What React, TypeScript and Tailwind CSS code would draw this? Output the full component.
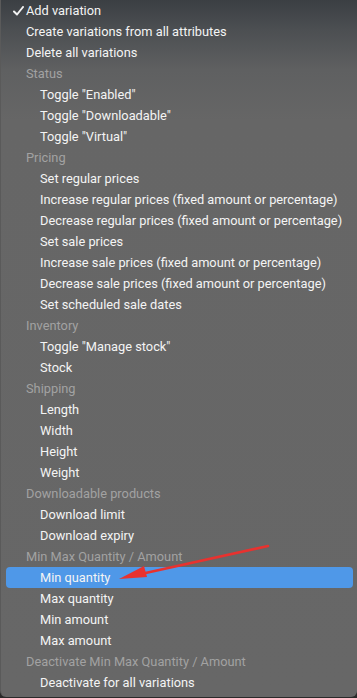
import React from "react";

type Item = { label: string; kind: "top" | "header" | "sub"; checked?: boolean; active?: boolean };

const items: Item[] = [
  { label: "Add variation", kind: "top", checked: true },
  { label: "Create variations from all attributes", kind: "top" },
  { label: "Delete all variations", kind: "top" },
  { label: "Status", kind: "header" },
  { label: 'Toggle "Enabled"', kind: "sub" },
  { label: 'Toggle "Downloadable"', kind: "sub" },
  { label: 'Toggle "Virtual"', kind: "sub" },
  { label: "Pricing", kind: "header" },
  { label: "Set regular prices", kind: "sub" },
  { label: "Increase regular prices (fixed amount or percentage)", kind: "sub" },
  { label: "Decrease regular prices (fixed amount or percentage)", kind: "sub" },
  { label: "Set sale prices", kind: "sub" },
  { label: "Increase sale prices (fixed amount or percentage)", kind: "sub" },
  { label: "Decrease sale prices (fixed amount or percentage)", kind: "sub" },
  { label: "Set scheduled sale dates", kind: "sub" },
  { label: "Inventory", kind: "header" },
  { label: 'Toggle "Manage stock"', kind: "sub" },
  { label: "Stock", kind: "sub" },
  { label: "Shipping", kind: "header" },
  { label: "Length", kind: "sub" },
  { label: "Width", kind: "sub" },
  { label: "Height", kind: "sub" },
  { label: "Weight", kind: "sub" },
  { label: "Downloadable products", kind: "header" },
  { label: "Download limit", kind: "sub" },
  { label: "Download expiry", kind: "sub" },
  { label: "Min Max Quantity / Amount", kind: "header" },
  { label: "Min quantity", kind: "sub", active: true },
  { label: "Max quantity", kind: "sub" },
  { label: "Min amount", kind: "sub" },
  { label: "Max amount", kind: "sub" },
  { label: "Deactivate Min Max Quantity / Amount", kind: "header" },
  { label: "Deactivate for all variations", kind: "sub" },
];

// checkmark next to the current value
const Check = () => (
  <svg width="11" height="10" viewBox="0 0 11 10" className="absolute left-[12px] top-[6px]">
    <path d="M1 5.5 L4 8.5 L10 1" fill="none" stroke="#f2f2f2" strokeWidth="2" strokeLinecap="round" strokeLinejoin="round" />
  </svg>
);

export default function App() {
  return (
    <div className="relative w-[357px] h-[698px] overflow-hidden bg-[#2a2a2a]">
      <div
        className="relative h-[697px] overflow-hidden rounded-b-[6px] border-l border-[#5a5a5a] bg-[linear-gradient(to_bottom,#3b3f43_0px,#4c4f52_30px,#5f6061_70px,#666666_120px,#676767_698px)]"
        style={{ fontFamily: 'Roboto, "Noto Sans", sans-serif' }}
      >
        <ul className="flex flex-col text-[12.8px]">
          {items.map((it, i) => (
            <li key={i} className="relative h-[21px]">
              {it.active && (
                <div className="absolute left-[5px] right-[4px] top-0 bottom-0 rounded-[4px] bg-[#4f98e8]" />
              )}
              {it.checked && <Check />}
              <span
                className={
                  "absolute top-0 leading-[21px] whitespace-nowrap " +
                  (it.kind === "sub" ? "left-[39px] " : "left-[25px] ") +
                  (it.kind === "header" ? "text-[#a2a2a2]" : "text-[#f4f4f4]")
                }
              >
                {it.label}
              </span>
            </li>
          ))}
        </ul>
        {/* red annotation arrow */}
        <svg className="absolute left-0 top-0 pointer-events-none" width="357" height="698" viewBox="0 0 357 698">
          <line x1="267" y1="546" x2="140" y2="574" stroke="#e8322f" strokeWidth="2.6" strokeLinecap="round" />
          <path d="M118 579 L143 566 L146 577 Z" fill="#e8322f" />
        </svg>
      </div>
    </div>
  );
}
